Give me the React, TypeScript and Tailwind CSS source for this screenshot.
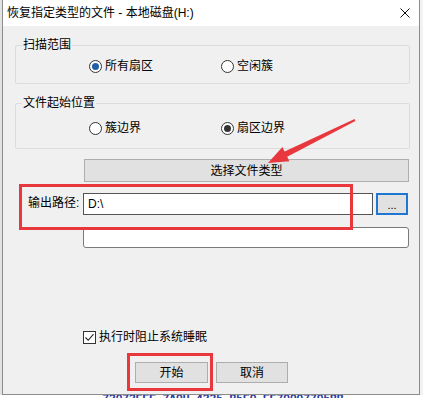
const font = "font-['Liberation_Sans','Noto_Sans_CJK_SC',sans-serif]";

const Radio = ({ checked, label, dot = "#333333", width }: { checked?: boolean; label: string; dot?: string; width?: string }) => (
  <div className={`flex items-center h-[16px] ${width ?? ""}`}>
    <span className="w-[13px] h-[13px] rounded-full border border-[#333333] bg-white flex items-center justify-center">
      {checked && <span className="w-[7px] h-[7px] rounded-full" style={{ backgroundColor: dot }} />}
    </span>
    <span className="ml-[3px] text-[12px] leading-[16px] text-black">{label}</span>
  </div>
);

const Group = ({ title, children, className }: { title: string; children: React.ReactNode; className?: string }) => (
  <fieldset className={`border border-[#dcdcdc] rounded-[2px] w-[395px] ${className ?? ""}`}>
    <legend className="ml-[6px] px-[1px] text-[12px] leading-[16px] text-black">{title}</legend>
    {children}
  </fieldset>
);

const WinButton = ({ title, className }: { title: string; className?: string }) => (
  <button className={`h-[21px] bg-[#e1e1e1] border border-[#adadad] text-[12px] leading-[16px] text-black flex items-center justify-center ${className ?? ""}`}>
    {title}
  </button>
);

export default function App() {
  return (
    <div className={`relative w-[423px] h-[398px] overflow-hidden bg-white flex flex-col ${font}`}>
      <div className="flex h-[395px]">
        <div className="w-[2px] bg-[#e2e2e2]" />
        {/* dialog */}
        <div className="w-[418px] flex flex-col border-x border-b border-[#8c8c8c]">
          {/* title bar */}
          <div className="h-[26px] bg-white flex items-center pl-[4px]">
            <span className="text-[12px] leading-[16px] text-black">恢复指定类型的文件 - 本地磁盘(H:)</span>
            <svg className="ml-auto mr-[9px]" width="10" height="10" viewBox="0 0 10 10">
              <path d="M0.5 0.5 L9.5 9.5 M9.5 0.5 L0.5 9.5" stroke="#111" strokeWidth="1" />
            </svg>
          </div>

          {/* body */}
          <div className="flex-1 bg-[#f0f0f0] pl-[12px] pt-[11px] flex flex-col">
            <Group title="扫描范围" className="pt-[5px] pb-[9px]">
              <div className="flex pl-[73px]">
                <Radio checked label="所有扇区" dot="#1f5fa6" width="w-[132px]" />
                <Radio label="空闲簇" />
              </div>
            </Group>

            <Group title="文件起始位置" className="mt-[11px] pt-[9px] pb-[12px]">
              <div className="flex pl-[73px]">
                <Radio label="簇边界" width="w-[132px]" />
                <Radio checked label="扇区边界" />
              </div>
            </Group>

            <WinButton title="选择文件类型" className="mt-[10px] ml-[69px] w-[325px] h-[23px]" />

            <div className="flex items-center mt-[11px]">
              <span className="ml-[13px] w-[55px] -mt-[3px] text-[12px] leading-[16px] text-black">输出路径:</span>
              <div className="w-[290px] h-[22px] bg-white border border-[#555555] flex items-center pl-[4px] text-[12px] text-black">
                D:\
              </div>
              <button className="ml-[3px] w-[32px] h-[22px] bg-[#e1e1e1] border-2 border-[#1e78d2] flex items-center justify-center text-[11px] leading-none text-black pt-[2px]">
                ...
              </button>
            </div>

            <div className="mt-[12px] ml-[68px] w-[326px] h-[21px] bg-white border border-[#7a7a7a] rounded-[3px]" />

            <div className="mt-[81px] ml-[68px] flex items-center h-[16px]">
              <span className="w-[13px] h-[13px] border border-[#333333] bg-white flex items-center justify-center">
                <svg width="11" height="11" viewBox="0 0 11 11">
                  <polyline points="1.5,5.5 4.2,8.3 9.5,2.2" fill="none" stroke="#222" strokeWidth="1.1" />
                </svg>
              </span>
              <span className="ml-[3px] text-[12px] leading-[16px] text-black">执行时阻止系统睡眠</span>
            </div>

            <div className="mt-[17px] ml-[120px] flex gap-[8px]">
              <WinButton title="开始" className="w-[73px]" />
              <WinButton title="取消" className="w-[72px]" />
            </div>
          </div>
        </div>
        <div className="flex-1 bg-[#f2f2f2]" />
      </div>

      {/* strip of the window behind */}
      <div className="h-[3px] overflow-hidden pl-[102px]">
        <div className="-mt-[1px] text-[12px] leading-none font-bold text-[#2b3a9c] font-['Liberation_Mono',monospace] tracking-[-0.5px]">
          73073EEE 7A0U 4335 B5E0 EE70007705BB
        </div>
      </div>

      {/* annotations */}
      <div className="absolute left-[19px] top-[184px] w-[334px] h-[46px] border-[3px] border-[#e8383d]" />
      <div className="absolute left-[127px] top-[353px] w-[86px] h-[38px] border-[3px] border-[#e8383d]" />
      <svg className="absolute left-0 top-0 pointer-events-none" width="423" height="398" viewBox="0 0 423 398">
        <polygon
          points="354.6,119.1 284.6,151.4 282.4,146.9 268,163 289.4,161.3 287.2,156.8 355.4,120.9"
          fill="#e8383d"
        />
      </svg>
    </div>
  );
}
